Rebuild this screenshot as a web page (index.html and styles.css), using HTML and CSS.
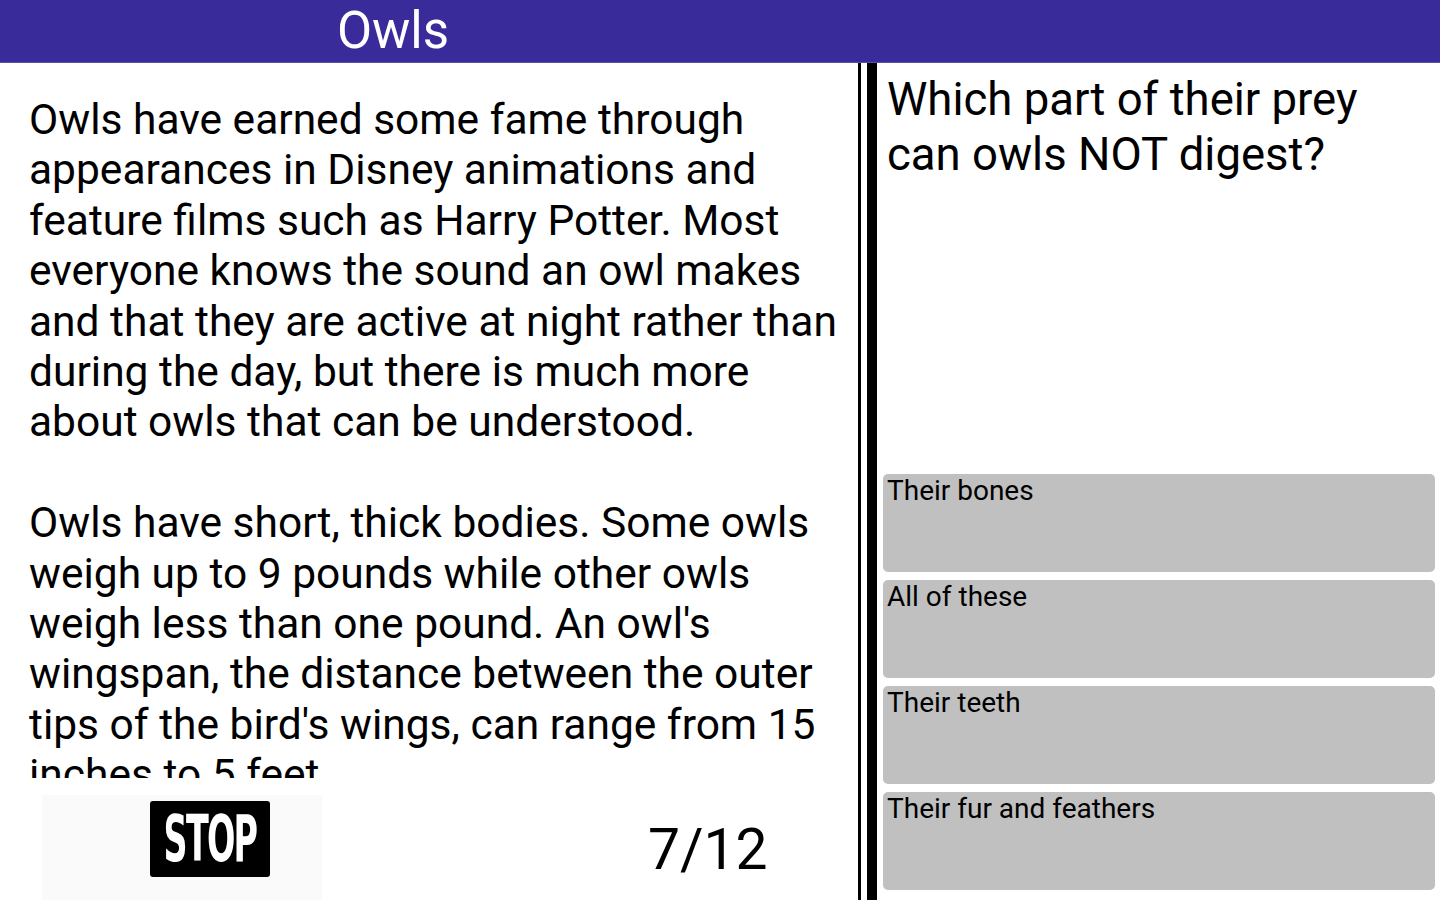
FILE: index.html
```html
<!DOCTYPE html>
<html>
<head>
    <title>Owls</title>
    <link rel="stylesheet" href="styles.css">
</head>
<body>
    <div class="header">
        <div class="title">Owls</div>
    </div>

    <div class="content">
        <div class="reading">
            <div class="passage">
                <p>Owls have earned some fame through appearances in Disney animations and feature films such as Harry Potter. Most everyone knows the sound an owl makes and that they are active at night rather than during the day, but there is much more about owls that can be understood.</p>
                <p>Owls have short, thick bodies. Some owls weigh up to 9 pounds while other owls weigh less than one pound. An owl's wingspan, the distance between the outer tips of the bird's wings, can range from 15 inches to 5 feet.</p>
            </div>
            <div class="controls">
                <div class="stop-wrap">
                    <div class="stop-btn"><span>STOP</span></div>
                </div>
                <div class="counter">7/12</div>
            </div>
        </div>

        <div class="divider">
            <div class="line-thin"></div>
            <div class="line-thick"></div>
        </div>

        <div class="quiz">
            <div class="question">Which part of their prey can owls NOT digest?</div>
            <div class="answers">
                <div class="answer">Their bones</div>
                <div class="answer">All of these</div>
                <div class="answer">Their teeth</div>
                <div class="answer">Their fur and feathers</div>
            </div>
        </div>
    </div>
</body>
</html>
```

FILE: styles.css
```css
body {
    font-family: Roboto, "Noto Sans", sans-serif;
    margin: 0;
    width: 1440px;
    height: 900px;
    overflow: hidden;
    background: #fff;
    color: #000;
}

/* Title bar */
.header {
    height: 62px;
    background-color: #3a2b9b;
    border-bottom: 1px solid #5a4db0;
    display: flex;
}

.header .title {
    width: 786px;
    text-align: center;
    color: #fff;
    font-size: 51px;
    line-height: 62px;
}

.content {
    display: flex;
    height: 837px;
}

/* Left side: passage */
.reading {
    width: 858px;
    display: flex;
    flex-direction: column;
}

.passage {
    height: 715px;
    overflow: hidden;
    padding: 32px 0 0 29px;
    box-sizing: border-box;
    font-size: 42.5px;
    line-height: 50.4px;
}

.passage p {
    margin: 0 0 50.4px 0;
}

.controls {
    flex: 1;
    display: flex;
    align-items: flex-end;
}

.stop-wrap {
    width: 280px;
    height: 105px;
    margin-left: 42px;
    background-color: #fafafa;
    display: flex;
    padding: 6px 0 0 108px;
    box-sizing: border-box;
}

.stop-btn {
    width: 120px;
    height: 76px;
    background-color: #000;
    border-radius: 3px;
    display: flex;
    justify-content: center;
    align-items: center;
    overflow: hidden;
}

.stop-btn span {
    color: #fff;
    font-family: "DejaVu Sans Condensed", "DejaVu Sans", sans-serif;
    font-weight: bold;
    font-size: 64px;
    letter-spacing: -3px;
    transform: scaleX(0.58);
    line-height: 1;
}

.counter {
    font-size: 57px;
    line-height: 57px;
    margin-left: 326px;
    padding-bottom: 22px;
}

/* Double line divider */
.divider {
    display: flex;
    width: 25px;
}

.line-thin {
    width: 3px;
    background: #000;
    margin-right: 6px;
}

.line-thick {
    width: 10px;
    background: #000;
}

/* Right side: question */
.quiz {
    flex: 1;
    display: flex;
    flex-direction: column;
    padding-right: 5px;
}

.question {
    font-size: 45.5px;
    line-height: 55px;
    padding: 9px 60px 0 4px;
    height: 402px;
    box-sizing: border-box;
}

.answers {
    display: flex;
    flex-direction: column;
    gap: 8px;
    margin-top: 9px;
}

.answer {
    height: 98px;
    background-color: #c0c0c0;
    border-radius: 5px;
    font-size: 28px;
    line-height: 34px;
    padding: 0 4px;
}
```
